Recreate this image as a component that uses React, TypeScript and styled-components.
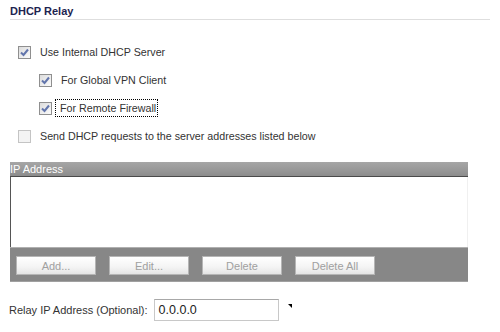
import React from "react";
import styled, { createGlobalStyle } from "styled-components";

const Global = createGlobalStyle`
  html, body { margin: 0; padding: 0; background: #fff; }
  body { font-family: Tahoma, "Liberation Sans", Arial, sans-serif; font-size: 11px; color: #333; }
`;

const Page = styled.div`
  width: 500px;
  height: 332px;
  display: flex;
  flex-direction: column;
  overflow: hidden;
`;

const Title = styled.div`
  margin-left: 10px;
  width: 480px;
  height: 20px;
  box-sizing: border-box;
  padding-top: 5px;
  border-bottom: 1px solid #dedede;
  font-weight: bold;
  font-size: 11px;
  color: #1d2450;
`;

const Options = styled.div`
  margin-top: 18px;
  display: flex;
  flex-direction: column;
`;

const Row = styled.div<{ $indent: number }>`
  height: 28px;
  display: flex;
  align-items: center;
  padding-left: ${(p) => p.$indent}px;
  gap: 8px;
`;

const Box = styled.span<{ $checked: boolean }>`
  width: 13px;
  height: 13px;
  box-sizing: border-box;
  border: 1px solid ${(p) => (p.$checked ? "#8f8f8f" : "#c4c4c4")};
  background: ${(p) => (p.$checked ? "linear-gradient(135deg, #dcdcdc, #fbfbfb)" : "#f3f3f3")};
  display: flex;
  align-items: center;
  justify-content: center;
  flex: none;
`;

const Label = styled.span<{ $focus?: boolean }>`
  color: #333;
  font-size: 10.7px;
  padding: 2px 1px;
  margin-left: ${(p) => (p.$focus ? "-4px" : "0")};
  padding-left: ${(p) => (p.$focus ? "4px" : "1px")};
  outline: ${(p) => (p.$focus ? "1px dotted #000" : "none")};
`;

const Check = () => (
  <svg width="9" height="9" viewBox="0 0 9 9">
    <path d="M1 4.5 L3.5 7 L8 1.5" fill="none" stroke="#6275ac" strokeWidth="2" />
  </svg>
);

const Option = ({ checked, indent, label, focus }: { checked: boolean; indent: number; label: string; focus?: boolean }) => (
  <Row $indent={indent}>
    <Box $checked={checked}>{checked && <Check />}</Box>
    <Label $focus={focus}>{label}</Label>
  </Row>
);

const Table = styled.div`
  margin-top: 12px;
  margin-left: 10px;
  width: 458px;
  display: flex;
  flex-direction: column;
`;

const Header = styled.div`
  height: 15px;
  box-sizing: border-box;
  background: linear-gradient(#a6a6a6, #9a9a9a 50%, #8c8c8c);
  border-bottom: 1px solid #4a4a4a;
  color: #fff;
  font-size: 11px;
  line-height: 14px;
  white-space: nowrap;
`;

const Body = styled.div`
  height: 70px;
  background: #fff;
  border-left: 1px solid #555;
  border-right: 1px solid #f0f0f0;
`;

const ButtonBar = styled.div`
  height: 35px;
  box-sizing: border-box;
  background: #878787;
  border-top: 1px solid #b0b0b0;
  border-bottom: 1px solid #a0a0a0;
  display: flex;
  align-items: flex-start;
  padding: 8px 0 0 6px;
  gap: 13px;
`;

const Button = styled.button`
  width: 80px;
  height: 19px;
  box-sizing: border-box;
  border: 1px solid #b5b5b5;
  background: linear-gradient(#ffffff, #f4f4f4 60%, #e4e4e4);
  color: #a0a0a0;
  font-family: inherit;
  font-size: 11px;
  padding: 0;
`;

const RelayRow = styled.div`
  margin-top: 17px;
  margin-left: 9px;
  display: flex;
  align-items: center;
  gap: 6px;
  position: relative;
`;

const Input = styled.div`
  width: 125px;
  height: 22px;
  box-sizing: border-box;
  border: 1px solid #c8c8c8;
  border-top-color: #a8a8a8;
  padding-left: 4px;
  font-size: 12.5px;
  color: #222;
  line-height: 20px;
`;

const Marker = styled.span`
  position: absolute;
  left: 279px;
  top: 5px;
  width: 0;
  height: 0;
  border-top: 4px solid #000;
  border-left: 4px solid transparent;
`;

export default function App() {
  return (
    <Page>
      <Global />
      <Title>DHCP Relay</Title>
      <Options>
        <Option checked indent={18} label="Use Internal DHCP Server" />
        <Option checked indent={39} label="For Global VPN Client" />
        <Option checked indent={39} label="For Remote Firewall" focus />
        <Option checked={false} indent={18} label="Send DHCP requests to the server addresses listed below" />
      </Options>
      <Table>
        <Header>IP Address</Header>
        <Body />
        <ButtonBar>
          <Button>Add...</Button>
          <Button>Edit...</Button>
          <Button>Delete</Button>
          <Button>Delete All</Button>
        </ButtonBar>
      </Table>
      <RelayRow>
        <span>Relay IP Address (Optional):</span>
        <Input>0.0.0.0</Input>
        <Marker />
      </RelayRow>
    </Page>
  );
}
